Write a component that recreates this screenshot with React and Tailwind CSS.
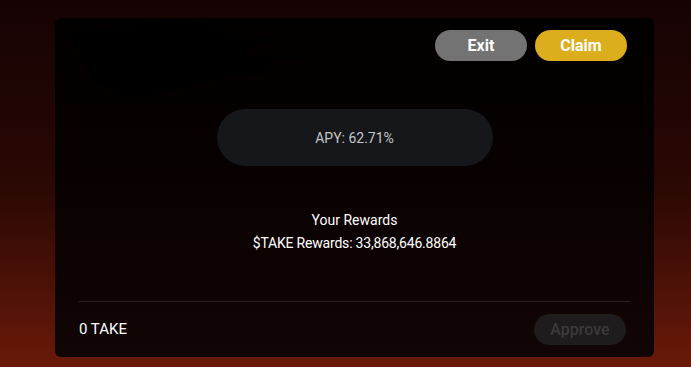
import React from 'react';

const font = { fontFamily: 'Roboto, "Liberation Sans", sans-serif' };

const Blob = () => (
    <svg className="absolute left-[15px] top-[-3px]" width="234" height="84" viewBox="0 0 234 84" fill="#000">
        <path d="M2,22 C10,14 40,10 62,12 C80,4 110,2 132,8 C150,14 160,20 168,28 L186,24 C196,20 210,22 200,28 L172,34 L176,40 L232,40 L232,46 L186,48 L204,52 L204,58 L160,62 C140,70 110,74 80,80 C60,84 40,80 30,70 C18,58 6,40 2,22 Z" />
        <path d="M150,30 L200,20 L200,26 L160,34 Z" />
    </svg>
);

export default function App() {
    return (
        <div className="w-[691px] h-[367px] overflow-hidden bg-gradient-to-b from-[#150303] via-[#2a0804] to-[#6a1a09] pt-[18px] pl-[55px]" style={font}>
            <div className="relative w-[599px] h-[339px] rounded-md bg-gradient-to-b from-[#030000] to-[#120505] px-6 pt-3 pb-3 flex flex-col">
                <Blob />
                <div className="relative flex justify-end gap-2 pr-[3px]">
                    <button className="w-[92px] h-[31px] rounded-full bg-[#737373] text-white font-bold text-base">Exit</button>
                    <button className="w-[92px] h-[31px] rounded-full bg-[#dcae1e] text-white font-bold text-base">Claim</button>
                </div>
                <div className="mt-[48px] mx-auto w-[276px] h-[57px] rounded-full bg-[#16171b] flex items-center justify-center text-sm text-[#c4c4c4]">
                    APY: 62.71%
                </div>
                <div className="mt-[43px] text-center text-white text-sm leading-[23px]">
                    <div>Your Rewards</div>
                    <div className="tracking-[-0.2px]">$TAKE Rewards: 33,868,646.8864</div>
                </div>
                <div className="mt-auto border-t border-[#2a2020] pt-3 flex items-center justify-between pr-[4px]">
                    <span className="text-white text-[15px]">0 TAKE</span>
                    <button className="w-[92px] h-[31px] rounded-full bg-[#1e1c1c] text-[#3b3b3b] font-medium text-base">Approve</button>
                </div>
            </div>
        </div>
    );
}
